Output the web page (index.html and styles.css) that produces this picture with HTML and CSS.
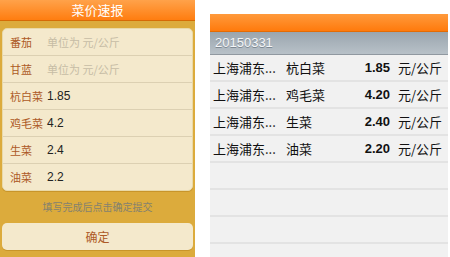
FILE: index.html
```html
<!DOCTYPE html>
<html lang="zh">
<head>
  <meta charset="UTF-8">
  <title>菜价速报</title>
  <link rel="stylesheet" href="styles.css">
</head>
<body>
  <div class="screens">
    <!-- Input screen -->
    <div class="report">
      <div class="report-bar">菜价速报</div>
      <div class="report-card">
        <div class="field"><span class="field-name">番茄</span><span class="field-hint">单位为 元/公斤</span></div>
        <div class="field"><span class="field-name">甘蓝</span><span class="field-hint">单位为 元/公斤</span></div>
        <div class="field"><span class="field-name">杭白菜</span><span class="field-value">1.85</span></div>
        <div class="field"><span class="field-name">鸡毛菜</span><span class="field-value">4.2</span></div>
        <div class="field"><span class="field-name">生菜</span><span class="field-value">2.4</span></div>
        <div class="field"><span class="field-name">油菜</span><span class="field-value">2.2</span></div>
      </div>
      <div class="report-tip">填写完成后点击确定提交</div>
      <div class="report-btn">确定</div>
    </div>

    <!-- List screen -->
    <div class="prices">
      <div class="prices-bar"></div>
      <div class="prices-date">20150331</div>
      <div class="price-row"><span class="market">上海浦东...</span><span class="veg">杭白菜</span><span class="num">1.85</span><span class="unit">元/公斤</span></div>
      <div class="price-row"><span class="market">上海浦东...</span><span class="veg">鸡毛菜</span><span class="num">4.20</span><span class="unit">元/公斤</span></div>
      <div class="price-row"><span class="market">上海浦东...</span><span class="veg">生菜</span><span class="num">2.40</span><span class="unit">元/公斤</span></div>
      <div class="price-row"><span class="market">上海浦东...</span><span class="veg">油菜</span><span class="num">2.20</span><span class="unit">元/公斤</span></div>
      <div class="price-row"></div>
      <div class="price-row"></div>
      <div class="price-row"></div>
      <div class="price-row"></div>
    </div>
  </div>
</body>
</html>
```

FILE: styles.css
```css
/* General */
body {
  margin: 0;
  background: #fff;
  font-family: "Noto Sans CJK SC", "Liberation Sans", sans-serif;
  overflow: hidden;
}

.screens {
  display: flex;
  gap: 15px;
  height: 257px;
  overflow: hidden;
}

/* Input screen */
.report {
  width: 195px;
  background: #dcab3c;
  display: flex;
  flex-direction: column;
}

.report-bar {
  height: 21px;
  line-height: 20px;
  text-align: center;
  color: #fff;
  font-size: 13px;
  background: linear-gradient(#ffa24a, #ff7d10);
  border-bottom: 1px solid #d66a06;
  box-sizing: border-box;
}

.report-card {
  margin: 7px 2px 0;
  background: #f4e9cc;
  border-radius: 5px;
  border: 1px solid #e9d9a8;
  box-shadow: 0 1px 0 #c8952a;
}

.field {
  display: flex;
  align-items: center;
  height: 26px;
  border-bottom: 1px solid #dcd0b2;
  font-size: 11px;
}

.field:last-child {
  border-bottom: none;
}

.field-name {
  flex: none;
  width: 37px;
  padding-left: 7px;
  color: #ad5a26;
}

.field-hint {
  color: #c6bca5;
}

.field-value {
  color: #222;
  font-family: "Liberation Sans", sans-serif;
  font-size: 12px;
}

.report-tip {
  margin-top: 8px;
  text-align: center;
  font-size: 10px;
  color: #85826f;
}

.report-btn {
  margin: 9px 2px 0;
  height: 27px;
  line-height: 27px;
  text-align: center;
  font-size: 12px;
  color: #ad5a26;
  background: #f4e9cc;
  border-radius: 5px;
  box-shadow: 0 1px 0 #c8952a;
}

/* List screen */
.prices {
  width: 238px;
  margin-top: 14px;
  background: #f1f1f1;
  overflow: hidden;
}

.prices-bar {
  height: 17px;
  background: linear-gradient(#ff9a3c, #ff7a0c);
  border-bottom: 1px solid #e36b04;
}

.prices-date {
  height: 22px;
  line-height: 22px;
  padding-left: 5px;
  color: #f4f6f8;
  font-family: "Liberation Sans", sans-serif;
  font-size: 13px;
  text-shadow: 0 1px 0 #7d8892;
  background: linear-gradient(#9aa5ae, #b8c1c8);
  border-bottom: 1px solid #9098a0;
}

.price-row {
  display: flex;
  align-items: center;
  height: 25px;
  border-bottom: 2px solid #e3e3e3;
  font-size: 13px;
  color: #111;
}

.market {
  width: 73px;
  padding-left: 3px;
}

.veg {
  flex: 1;
}

.num {
  font-family: "Liberation Sans", sans-serif;
  font-weight: bold;
  font-size: 13px;
  margin-right: 8px;
}

.unit {
  width: 50px;
}
```
